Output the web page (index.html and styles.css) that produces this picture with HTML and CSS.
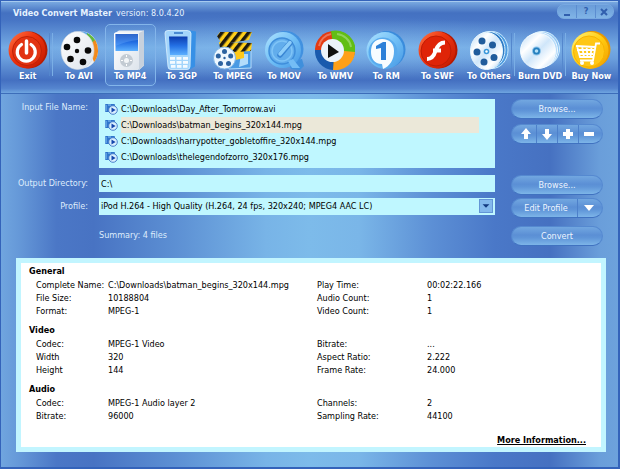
FILE: index.html
```
<!DOCTYPE html>
<html lang="en">

<head>
    <meta charset="UTF-8">
    <meta name="viewport" content="width=device-width, initial-scale=1.0">
    <title>Video Convert Master</title>
    <link rel="stylesheet" href="styles.css">
</head>

<body>

    <!-- shared gradients and the small file icon -->
    <svg class="defs" aria-hidden="true">
        <defs>
            <linearGradient id="red" x1="0" y1="0" x2="1" y2="1"><stop offset="0" stop-color="#ff7a4a"/><stop offset=".4" stop-color="#ee3410"/><stop offset="1" stop-color="#c01800"/></linearGradient>
            <linearGradient id="blue" x1="0" y1="0" x2="1" y2="1"><stop offset="0" stop-color="#b0e4ff"/><stop offset=".5" stop-color="#70bff6"/><stop offset="1" stop-color="#4597e4"/></linearGradient>
            <linearGradient id="screen" x1="0" y1="0" x2="0" y2="1"><stop offset="0" stop-color="#0b3cae"/><stop offset=".5" stop-color="#2470e4"/><stop offset="1" stop-color="#5cb0ff"/></linearGradient>
            <linearGradient id="white" x1="0" y1="0" x2="1" y2="1"><stop offset="0" stop-color="#ffffff"/><stop offset="1" stop-color="#dde4ec"/></linearGradient>
            <linearGradient id="disc" x1="0" y1="0" x2="1" y2="1"><stop offset="0" stop-color="#b5d8f5"/><stop offset=".3" stop-color="#ffffff"/><stop offset=".5" stop-color="#cfe6fa"/><stop offset=".75" stop-color="#ffffff"/><stop offset="1" stop-color="#aed2f2"/></linearGradient>
            <linearGradient id="gold" x1="0" y1="0" x2="1" y2="1"><stop offset="0" stop-color="#fff27a"/><stop offset=".5" stop-color="#ffcc10"/><stop offset="1" stop-color="#f09c00"/></linearGradient>
            <pattern id="stripes" width="7" height="7" patternUnits="userSpaceOnUse" patternTransform="rotate(38)"><rect width="7" height="7" fill="#ffcf1c"/><rect width="3.500" height="7" fill="#1d1a10"/></pattern>
        </defs>
        <symbol id="clip" viewBox="0 0 13 11">
            <rect x="0" y="0" width="10" height="8" rx="1" fill="#2f75cc"/>
            <path d="M1 1v6M3 1h3" stroke="#8cc8f6"/>
            <circle cx="8" cy="6" r="4.300" fill="#d9efff" stroke="#4a80cc"/>
            <path d="M6.500 3.400v5.200L10.600 6z" fill="#1546ac"/>
        </symbol>
    </svg>

    <div class="window">
        <header class="header">
            <div class="titlebar">
                <h1><b>Video Convert Master</b> <span>version: 8.0.4.20</span></h1>
                <div class="winbuttons">
                    <button type="button" aria-label="Minimize"><svg viewBox="0 0 10 10"><path d="M2 8h6"/></svg></button>
                    <button type="button">?</button>
                    <button type="button" aria-label="Close"><svg viewBox="0 0 10 10"><path d="M2 2l6 6M8 2l-6 6"/></svg></button>
                </div>
            </div>

            <nav class="toolbar">
                <button type="button" class="tool divider">
                    <svg viewBox="0 0 40 40">
                        <circle cx="21" cy="20" r="18.500" fill="#b51c02"/>
                        <circle cx="19" cy="20" r="18.500" fill="url(#red)"/>
                        <circle cx="19" cy="21" r="14.500" fill="#e23312" stroke="#c02206"/>
                        <path d="M13.500 14.500a9 9 0 1 0 9.500 0" fill="none" stroke="#fff" stroke-width="3.200" stroke-linecap="round"/>
                        <path d="M18.500 11v12" stroke="#fff" stroke-width="3.500" stroke-linecap="round"/>
                    </svg>
                    <span>Exit</span>
                </button>
                <button type="button" class="tool">
                    <svg viewBox="0 0 40 40">
                        <ellipse cx="23" cy="20" rx="16" ry="18.500" fill="#e8eef5"/>
                        <path d="M22 1.500a17 18 0 0 1 9 3l-5 8z" fill="#49a0e8"/>
                        <path d="M28 3a17 18 0 0 1 9.500 10l-9-1z" fill="#62b83c"/>
                        <path d="M36 10a17 18 0 0 1-1 22l-6-16z" fill="#f28a1c"/>
                        <ellipse cx="18.500" cy="20.500" rx="16.500" ry="19" fill="url(#white)" stroke="#d0d8e0" stroke-width=".6"/>
                        <g fill="#080808"><circle cx="18" cy="10" r="3.300"/><circle cx="29" cy="20.500" r="3.300"/><circle cx="24" cy="32" r="3.300"/><circle cx="11.500" cy="29" r="3.300"/><circle cx="8" cy="17" r="3.300"/><circle cx="18" cy="21" r="2.200"/></g>
                    </svg>
                    <span>To AVI</span>
                </button>
                <button type="button" class="tool selected">
                    <svg viewBox="0 0 40 40">
                        <path d="M5 3l4-2.500h25v35l-5 4.500z" fill="#e9eef4"/>
                        <path d="M29 3l5-2.500v35l-5 4.500z" fill="#c7d1dd"/>
                        <rect x="4" y="2.500" width="25" height="37.500" rx="1.500" fill="url(#white)"/>
                        <rect x="5.500" y="4" width="22.500" height="17" fill="url(#screen)"/>
                        <path d="M5.500 4h22.500v6q-11 1-22.500 6z" fill="#6fb3ff" opacity=".35"/>
                        <circle cx="16.500" cy="30.500" r="6.500" fill="#c3cbd3"/>
                        <circle cx="16.500" cy="30.500" r="2.500" fill="#f3f6f8"/>
                        <path d="M16.500 25v2M16.500 34v2M11 30.500h2M20 30.500h2" stroke="#fff"/>
                    </svg>
                    <span>To MP4</span>
                </button>
                <button type="button" class="tool">
                    <svg viewBox="0 0 40 40">
                        <path d="M27 0l8 1.500-1 35-6 3.500z" fill="#3790e6"/>
                        <path d="M4 3q0-2.500 3-2.500h19q4 0 4 3l-1 33q0 3-3 3H10q-3 0-3-3z" fill="#a3d5fb" stroke="#dcf1ff" stroke-width=".8"/>
                        <path d="M13 3h9" stroke="#2d71c4" stroke-width="1.500"/>
                        <path d="M8 6.500h18.500V25H9z" fill="url(#screen)"/>
                        <g fill="#f4fbff"><rect x="9" y="27" width="5" height="2.800"/><rect x="15.500" y="27" width="5" height="2.800"/><rect x="22" y="27" width="5" height="2.800"/><rect x="9" y="31" width="5" height="2.800"/><rect x="15.500" y="31" width="5" height="2.800"/><rect x="22" y="31" width="5" height="2.800"/><rect x="10" y="35" width="4.500" height="2.800"/><rect x="16" y="35" width="4.500" height="2.800"/><rect x="22" y="35" width="4.500" height="2.800"/></g>
                    </svg>
                    <span>To 3GP</span>
                </button>
                <button type="button" class="tool">
                    <svg viewBox="0 0 40 40">
                        <path d="M11 20l27-2v20l-22 1z" fill="#4a9ae4" stroke="#b5dcfb"/>
                        <path d="M28 24h7v10l-9 3z" fill="#b3dcfb"/>
                        <path d="M14 19h17v9l-13 3z" fill="#ffc818"/>
                        <path d="M4 6l3-4h32l-3 8-27 4z" fill="url(#stripes)"/>
                        <path d="M6 12l33 1-1 8-16 1-15-4z" fill="url(#stripes)"/>
                        <circle cx="11.500" cy="28" r="11" fill="#eef7ff" stroke="#7fb5e6"/>
                        <g fill="#2c62a0"><circle cx="11.500" cy="21.500" r="2.500"/><circle cx="17.700" cy="26" r="2.500"/><circle cx="15.500" cy="33.500" r="2.500"/><circle cx="7.500" cy="33.500" r="2.500"/><circle cx="5.300" cy="26" r="2.500"/><circle cx="11.500" cy="28" r="1.200"/></g>
                    </svg>
                    <span>To MPEG</span>
                </button>
                <button type="button" class="tool">
                    <svg viewBox="0 0 40 40">
                        <path d="M24 32l14-3 2 7-4 4-9-1z" fill="#3f8fdc"/>
                        <circle cx="21.500" cy="19" r="18" fill="#4191e0"/>
                        <circle cx="19" cy="20" r="18" fill="url(#blue)"/>
                        <circle cx="18" cy="21" r="13" fill="#62adec" stroke="#3f8edb" stroke-width="1.500"/>
                        <circle cx="18" cy="21" r="10" fill="none" stroke="#7fc4f7" stroke-width="1.500"/>
                        <path d="M16 25L26 13" stroke="#3a86d4" stroke-width="5.500" stroke-linecap="round"/>
                        <path d="M16 24L26 12.500" stroke="#8ccdfa" stroke-width="3.500" stroke-linecap="round"/>
                        <path d="M24 31l5-2 7 9h-8z" fill="#74bdf5"/>
                    </svg>
                    <span>To MOV</span>
                </button>
                <button type="button" class="tool">
                    <svg viewBox="0 0 40 40">
                        <circle cx="21" cy="20" r="19" fill="#6a7a40"/>
                        <path d="M19 1A19 19 0 0 0 0 21h19z" fill="#e43a12"/>
                        <path d="M16 1a20 19 0 0 1 24 22l-21-2z" fill="#62be14"/>
                        <path d="M40 22a20 19 0 0 1-22 18l1-20z" fill="#ffa018"/>
                        <path d="M0 20a19 19 0 0 0 18 20l1-20z" fill="#1a5aad"/>
                        <path d="M4 16a15 15 0 0 1 12-12M22 4a16 15 0 0 1 14 13" fill="none" stroke="#fff" opacity=".3" stroke-width="2"/>
                        <circle cx="17.500" cy="20.500" r="11.500" fill="#ebf3fb"/>
                        <path d="M13 14v14l11-6z" fill="#101010"/>
                    </svg>
                    <span>To WMV</span>
                </button>
                <button type="button" class="tool">
                    <svg viewBox="0 0 40 40">
                        <circle cx="21" cy="19.500" r="18.500" fill="#3a8cdc"/>
                        <circle cx="19" cy="20.500" r="18.500" fill="url(#blue)"/>
                        <circle cx="17" cy="22" r="14.500" fill="#58abee"/>
                        <path d="M16 9c8 0 12 5 12 12 0 9-4 15-11 18l-1-5C8 34 5 28 5 22 5 14 9 9 16 9z" fill="#f7fcff"/>
                        <path d="M10 16l7-4h3v18h-5V18l-5 1z" fill="#2c80d8"/>
                    </svg>
                    <span>To RM</span>
                </button>
                <button type="button" class="tool">
                    <svg viewBox="0 0 40 40">
                        <circle cx="21" cy="20" r="18.500" fill="#b51800"/>
                        <circle cx="19" cy="20" r="18.500" fill="url(#red)"/>
                        <circle cx="18" cy="21" r="15" fill="#df2408" stroke="#bf1c04"/>
                        <path d="M27 12.500c-6 0-8 4-9.500 8.500-1.200 4-3.500 8-8.500 8M15 20.500h8" fill="none" stroke="#fff" stroke-width="4"/>
                    </svg>
                    <span>To SWF</span>
                </button>
                <button type="button" class="tool divider">
                    <svg viewBox="0 0 40 40">
                        <ellipse cx="23" cy="20" rx="16" ry="18.500" fill="#4c9be0" stroke="#c9ebff"/>
                        <ellipse cx="20" cy="20" rx="16" ry="18.500" fill="#2f7cc6" stroke="#d9f1ff"/>
                        <ellipse cx="17.500" cy="21" rx="16" ry="18.500" fill="url(#disc)" stroke="#e8f7ff"/>
                        <g fill="#205c9c"><circle cx="13" cy="11" r="3.500"/><circle cx="23.500" cy="15" r="3.500"/><circle cx="25" cy="27.500" r="3.500"/><circle cx="15" cy="32" r="3.500"/><circle cx="8" cy="22" r="3.500"/><circle cx="17.500" cy="21.500" r="2.800" fill="#3997da"/></g>
                        <circle cx="17.500" cy="21.500" r="1.200" fill="#fff"/>
                    </svg>
                    <span>To Others</span>
                </button>
                <button type="button" class="tool divider">
                    <svg viewBox="0 0 40 40">
                        <circle cx="22" cy="19" r="17.500" fill="#8fc5f3" stroke="#d8f0ff"/>
                        <circle cx="20" cy="20" r="17.500" fill="#b5dafa" stroke="#edf8ff"/>
                        <circle cx="18" cy="21" r="17.500" fill="url(#disc)" stroke="#f3fbff"/>
                        <circle cx="16.500" cy="21" r="4.500" fill="#8cc3ea"/>
                        <circle cx="16.500" cy="21" r="3.500" fill="#247fbe"/>
                        <circle cx="16.500" cy="21" r="1.800" fill="#b4e0f8"/>
                    </svg>
                    <span>Burn DVD</span>
                </button>
                <button type="button" class="tool">
                    <svg viewBox="0 0 40 40">
                        <circle cx="21" cy="19.500" r="18.500" fill="#ea9a00"/>
                        <circle cx="19" cy="20.500" r="18.500" fill="url(#gold)"/>
                        <circle cx="18" cy="21.500" r="15.500" fill="#ffc716" stroke="#f8b400"/>
                        <path d="M29 13.500h-4l-3 17H9M5 16l19 1M6 16l3 11h13M11 16l2 11M15.500 16l1 11M20.500 17l-1 10M6 20h17M8 24h14" fill="none" stroke="#fff" stroke-width="1.800"/>
                        <circle cx="11" cy="33" r="2" fill="#fff"/><circle cx="21" cy="33" r="2" fill="#fff"/>
                    </svg>
                    <span>Buy Now</span>
                </button>
            </nav>
        </header>

        <main class="content">
            <form class="form">
                <span class="label" id="files-label">Input File Name:</span>
                <ul class="files" role="listbox" aria-labelledby="files-label">
                    <li role="option"><svg><use href="#clip"/></svg><span>C:\Downloads\Day_After_Tomorrow.avi</span></li>
                    <li role="option" aria-selected="true" class="current"><svg><use href="#clip"/></svg><span>C:\Downloads\batman_begins_320x144.mpg</span></li>
                    <li role="option"><svg><use href="#clip"/></svg><span>C:\Downloads\harrypotter_gobletoffire_320x144.mpg</span></li>
                    <li role="option"><svg><use href="#clip"/></svg><span>C:\Downloads\thelegendofzorro_320x176.mpg</span></li>
                </ul>
                <div class="actions">
                    <button type="button" class="pill">Browse...</button>
                    <div class="pill group">
                        <button type="button" aria-label="Move up"><svg viewBox="0 0 12 12"><path d="M6 0l5 6H8v5H4V6H1z"/></svg></button>
                        <button type="button" aria-label="Move down"><svg viewBox="0 0 12 12"><path d="M6 12l5-6H8V1H4v5H1z"/></svg></button>
                        <button type="button" aria-label="Add"><svg viewBox="0 0 12 12"><path d="M4 1h4v3h3v4H8v3H4V8H1V4h3z"/></svg></button>
                        <button type="button" aria-label="Remove"><svg viewBox="0 0 12 12"><path d="M1 4h10v4H1z"/></svg></button>
                    </div>
                </div>

                <label class="label" for="output">Output Directory:</label>
                <input class="field" type="text" id="output" value="C:\">
                <button type="button" class="pill">Browse...</button>

                <label class="label" for="profile">Profile:</label>
                <div class="select">
                    <select class="field" id="profile">
                        <option>iPod H.264 - High Quality (H.264, 24 fps, 320x240; MPEG4 AAC LC)</option>
                    </select>
                    <svg class="arrow" viewBox="0 0 14 14"><path d="M3 5h8L7 9z"/></svg>
                </div>
                <div class="pill group split">
                    <button type="button">Edit Profile</button>
                    <button type="button" aria-label="Profile menu"><svg viewBox="0 0 12 12"><path d="M1 3h10L6 9z"/></svg></button>
                </div>

                <p class="summary">Summary: 4 files</p>
                <button type="button" class="pill convert">Convert</button>
            </form>

            <section class="info">
                <h2>General</h2>
                <table>
                    <tr><th>Complete Name:</th><td>C:\Downloads\batman_begins_320x144.mpg</td><th>Play Time:</th><td>00:02:22.166</td></tr>
                    <tr><th>File Size:</th><td>10188804</td><th>Audio Count:</th><td>1</td></tr>
                    <tr><th>Format:</th><td>MPEG-1</td><th>Video Count:</th><td>1</td></tr>
                </table>
                <h2>Video</h2>
                <table>
                    <tr><th>Codec:</th><td>MPEG-1 Video</td><th>Bitrate:</th><td>...</td></tr>
                    <tr><th>Width</th><td>320</td><th>Aspect Ratio:</th><td>2.222</td></tr>
                    <tr><th>Height</th><td>144</td><th>Frame Rate:</th><td>24.000</td></tr>
                </table>
                <h2>Audio</h2>
                <table>
                    <tr><th>Codec:</th><td>MPEG-1 Audio layer 2</td><th>Channels:</th><td>2</td></tr>
                    <tr><th>Bitrate:</th><td>96000</td><th>Sampling Rate:</th><td>44100</td></tr>
                </table>
                <a class="more" href="#">More Information...</a>
            </section>
        </main>
    </div>

</body>

</html>
```
FILE: styles.css
```
* {
    box-sizing: border-box;
}

body {
    margin: 0;
}

body,
button,
input,
select {
    font-family: "DejaVu Sans Condensed", "DejaVu Sans", Tahoma, sans-serif;
    font-stretch: condensed;
    font-size: 9px;
    line-height: 13px;
}

button {
    border: 0;
    padding: 0;
    background: none;
    color: #fff;
}

h1,
h2,
p,
ul {
    margin: 0;
    padding: 0;
    font-size: inherit;
    font-weight: normal;
}

.defs {
    position: absolute;
    width: 0;
    height: 0;
}

.window {
    display: flex;
    flex-direction: column;
    min-height: 100vh;
    border: 1px solid #3463ba;
    border-right-width: 2px;
    border-bottom-width: 2px;
    background: linear-gradient(90deg, #70a5df 0, #6598d8 3%, #4b77c6 9%, #4873c3 15%, #5c8fd3 28%, #78b4e7 43%, #7dbbea 50%, #7ab6e8 58%, #5c8fd5 70%, #4a78c8 80%, #4671c1 89%, #6a9eda 97%, #6da2dc 100%);
}

.header {
    height: 93px;
    border-top: 1px solid #a6caef;
    border-bottom: 1px solid #3c6db9;
    background:
        radial-gradient(ellipse 50% 35% at 50% 50%, rgba(140, 200, 245, .4), transparent),
        linear-gradient(#78a8e0 0, #4471c1 12%, #4775c5 20%, #75abe4 50%, #6b9fdd 62%, #4470c1 86%, #5585cf 95%, #6fa5e0 100%);
}

.titlebar {
    display: flex;
    justify-content: space-between;
    height: 22px;
    padding: 2px 4px 0 12px;
}

.titlebar h1 {
    display: flex;
    gap: 4px;
    padding-top: 3px;
    color: #e6f2ff;
}

.winbuttons {
    display: grid;
    grid-template-columns: repeat(3, 1fr);
    width: 57px;
    height: 15px;
    border: 1px solid #78a9e1;
    border-radius: 7px;
    background: linear-gradient(#6a9cd9, #80b4e6);
}

.winbuttons button {
    display: flex;
    align-items: center;
    justify-content: center;
    color: #315fae;
    font-weight: bold;
}

.winbuttons button + button {
    border-left: 1px solid #5c8dd0;
}

.winbuttons svg {
    width: 10px;
    height: 10px;
    stroke: #315fae;
    stroke-width: 2;
}

.toolbar {
    display: grid;
    grid-template-columns: repeat(12, 1fr);
    padding: 0 1px;
}

.tool {
    position: relative;
    display: flex;
    flex-direction: column;
    align-items: center;
    height: 62px;
    padding-top: 5px;
    border: 1px solid transparent;
    border-radius: 5px;
    font-weight: bold;
    white-space: nowrap;
}

.tool svg {
    width: 40px;
    height: 40px;
}

.tool span {
    text-shadow: 0 1px 1px #2f5cab;
}

.tool.selected {
    border-color: #83b5ea;
    background: rgba(120, 180, 235, .15);
}

/* thin line between the tool groups */
.divider::after {
    content: "";
    position: absolute;
    top: 8px;
    right: -1px;
    width: 2px;
    height: 43px;
    border-left: 1px solid #5487cd;
    border-right: 1px solid #7aaee5;
}

.content {
    display: flex;
    flex: 1;
    flex-direction: column;
}

.form {
    display: grid;
    grid-template-columns: 87px 1fr 92px;
    column-gap: 11px;
    padding: 5px 15px 0 0;
}

.label {
    padding-top: 2px;
    color: #deecfc;
    text-align: right;
}

.files {
    height: 69px;
    margin-right: 5px;
    padding: 2px 16px 0 6px;
    background: #bff7ff;
    list-style: none;
}

.files li {
    display: flex;
    align-items: center;
    gap: 3px;
    height: 16px;
}

.files svg {
    width: 13px;
    height: 11px;
}

.files span {
    flex: 1;
}

.files .current span {
    background: #ebe8d9;
    line-height: 16px;
}

.actions {
    display: grid;
    gap: 5px;
    height: 76px;
    align-content: start;
}

.field {
    width: 100%;
    height: 17px;
    padding: 0 2px;
    border: 0;
    border-radius: 0;
    background: #bff7ff;
    color: #000;
    appearance: none;
}

input.field {
    width: auto;
    margin-right: 5px;
}

.select {
    position: relative;
    height: 23px;
    margin-right: 5px;
}

.arrow {
    position: absolute;
    top: 1px;
    right: 2px;
    width: 14px;
    height: 14px;
    border: 1px solid #6395d6;
    background: #83b9ed;
    fill: #123a80;
    pointer-events: none;
}

.pill {
    height: 20px;
    border: 1px solid #5589d0;
    border-bottom-color: #4072c0;
    border-radius: 10px;
    background: linear-gradient(#72a7e0, #5b8fd5 45%, #5f95d8 60%, #7db5e8);
    color: #eef6ff;
}

.form > .pill {
    margin-bottom: 3px;
}

.group {
    display: grid;
    grid-template-columns: repeat(4, 1fr);
    padding: 0 3px;
}

.group button {
    display: flex;
    align-items: center;
    justify-content: center;
    color: #eef6ff;
}

.group button + button {
    border-left: 1px solid #4d80ca;
}

.group svg {
    width: 12px;
    height: 12px;
    fill: #fff;
}

.split {
    grid-template-columns: 1fr 22px;
}

.summary {
    grid-column: 2;
    padding-top: 8px;
    color: #deecfc;
}

.form > .convert {
    margin-top: 5px;
}

.info {
    display: flex;
    flex: 1;
    flex-direction: column;
    margin: 9px 12px 15px 15px;
    padding: 2px 15px 0 8px;
    border: 5px solid #c2f5ff;
    background: #fff;
    color: #000;
}

.info h2 {
    margin-bottom: 1px;
    font-weight: bold;
}

.info table {
    width: calc(100% - 7px);
    margin: 0 0 6px 7px;
    border-collapse: collapse;
    table-layout: fixed;
}

.info th,
.info td {
    padding: 0;
    font-weight: normal;
    text-align: left;
    white-space: nowrap;
}

.info th:first-child {
    width: 72px;
}

.info td:nth-child(2) {
    width: 38%;
}

.info th:nth-child(3) {
    width: 20%;
}

.more {
    margin-top: auto;
    align-self: flex-end;
    color: #000;
    font-weight: bold;
}
```
